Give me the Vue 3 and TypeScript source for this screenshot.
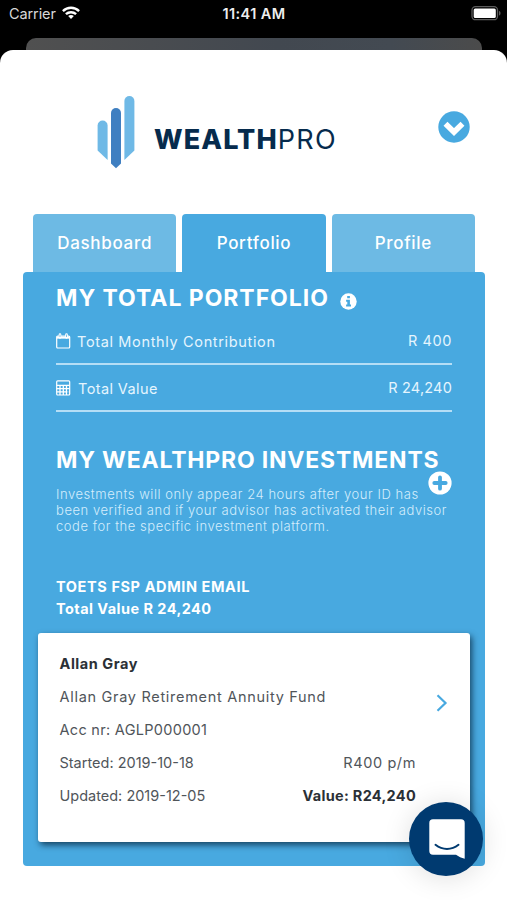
<script setup lang="ts">
interface SummaryRow {
  icon: 'calendar' | 'calculator'
  label: string
  value: string
}

const tabs: string[] = ['Dashboard', 'Portfolio', 'Profile']
const activeTab = 'Portfolio'

const summary: SummaryRow[] = [
  { icon: 'calendar', label: 'Total Monthly Contribution', value: 'R 400' },
  { icon: 'calculator', label: 'Total Value', value: 'R 24,240' },
]

const notice: string[] = [
  'Investments will only appear 24 hours after your ID has',
  'been verified and if your advisor has activated their advisor',
  'code for the specific investment platform.',
]
</script>

<template>
  <div class="screen">
    <header class="status-bar">
      <div class="carrier">
        <span>Carrier</span>
        <svg width="18" height="14" viewBox="0 0 18 14" fill="none" stroke="#fff" stroke-width="2.4">
          <path d="M.9 5.100C5.500.7 12.500.7 17.100 5.100" />
          <path d="M3.900 8.200c2.900-2.700 7.300-2.700 10.200 0" />
          <path d="M6.200 10.100c1.600-1.400 4-1.400 5.600 0L9 13z" fill="#fff" stroke="none" />
        </svg>
      </div>
      <span class="clock">11:41 AM</span>
      <svg class="battery" width="31" height="15" viewBox="0 0 31 15">
        <rect x="1" y=".7" width="25.500" height="13" rx="3.500" fill="none" stroke="#5c5c5c" stroke-width="1.300" />
        <rect x="2.700" y="2.400" width="22.100" height="9.600" rx="1.500" fill="#fff" />
        <path d="M28 5v4.500c2-.6 2-3.900 0-4.500z" fill="#5c5c5c" />
      </svg>
    </header>
    <div class="back-sheet"></div>

    <main class="sheet">
      <div class="brand-row">
        <svg class="brand-mark" width="38" height="74" viewBox="0 0 38 74">
          <path d="M.6 29.500a5 5 0 0 1 10 0V64L.6 54.500z" fill="#6fb9e6" />
          <path d="M14 17a5 5 0 0 1 10 0v50.500L19 72.300 14 67.500z" fill="#3f7fc1" />
          <path d="M27.400 5a5 5 0 0 1 10 0v49.500L27.400 64z" fill="#6fb9e6" />
        </svg>
        <h1 class="brand-name"><b>WEALTH</b><span>PRO</span></h1>
        <svg class="collapse" width="32" height="32" viewBox="0 0 32 32">
          <circle cx="16" cy="16" r="15.700" fill="#48a9e0" />
          <path d="m7.500 12.800 8.500 8.300 8.500-8.300" fill="none" stroke="#fff" stroke-width="5.600" />
        </svg>
      </div>

      <nav class="tabs">
        <div v-for="tab in tabs" :key="tab" class="tab" :class="{ active: tab === activeTab }">{{ tab }}</div>
      </nav>

      <section class="panel">
        <div class="overview">
          <h2 class="total-title">
            <span>MY TOTAL PORTFOLIO</span>
            <svg width="17" height="17" viewBox="0 0 17 17">
              <circle cx="8.500" cy="8.500" r="8.200" fill="#fff" />
              <path d="M7.200 3h2.700v2.300H7.200zM6.100 6.800h3.800v4.600H11v2H6.100v-2h1.200V8.800H6.100z" fill="#48a9e0" />
            </svg>
          </h2>
          <div v-for="row in summary" :key="row.label" class="summary-row" :class="row.icon">
            <svg v-if="row.icon === 'calendar'" width="15" height="16" viewBox="0 0 15 16" fill="none" stroke="#fff">
              <rect x=".7" y="3" width="13" height="12" rx="1" stroke-width="1.200" />
              <path d="M.7 4.500h13" stroke-width="2.300" />
              <path d="M4 1.700v2.600M10.500 1.700v2.600" stroke-width="2.700" stroke-linecap="round" />
              <path d="M4 1.500v2.500M10.500 1.500v2.500" stroke="#48a9e0" stroke-width=".7" />
            </svg>
            <svg v-else width="15" height="16" viewBox="0 0 15 16" fill="none" stroke="#fff">
              <rect x=".7" y=".8" width="13" height="14.200" rx="1" stroke-width="1.200" />
              <path d="M.7 5.400h13M.7 8.600h13M.7 11.800h13M4 5.400V15M7.300 5.400V15M10.500 5.400V15" stroke-width="1.300" />
              <path d="M12.100 9.500v4.500" stroke="#48a9e0" stroke-width="1.300" />
            </svg>
            <span class="label">{{ row.label }}</span>
            <span class="value">{{ row.value }}</span>
          </div>

          <h2 class="investments-title">MY WEALTHPRO INVESTMENTS</h2>
          <div class="notice-wrap">
            <p class="notice"><span v-for="line in notice" :key="line">{{ line }}</span></p>
            <svg class="add" width="24" height="24" viewBox="0 0 24 24">
              <circle cx="12" cy="12" r="11.600" fill="#fff" />
              <path d="M12 6.300v11.400M6.300 12h11.400" stroke="#48a9e0" stroke-width="3.800" stroke-linecap="round" />
            </svg>
          </div>
          <div class="account">
            <p class="account-name">TOETS FSP ADMIN EMAIL</p>
            <p class="account-total">Total Value R 24,240</p>
          </div>
        </div>

        <article class="card">
          <div class="line"><b class="provider">Allan Gray</b></div>
          <div class="line"><span class="fund">Allan Gray Retirement Annuity Fund</span></div>
          <div class="line"><span class="number">Acc nr: AGLP000001</span></div>
          <div class="line"><span>Started: 2019-10-18</span><span class="monthly">R400 p/m</span></div>
          <div class="line"><span>Updated: 2019-12-05</span><b class="worth">Value: R24,240</b></div>
          <svg class="chevron" width="12" height="18" viewBox="0 0 12 18" fill="none" stroke="#48a9e0" stroke-width="2.200">
            <path d="m1.500 1.300 8 7.700-8 7.700" />
          </svg>
        </article>
      </section>
    </main>

    <button class="chat" aria-label="Chat">
      <svg width="36" height="40" viewBox="0 0 36 40">
        <path d="M4 .3h28a3.700 3.700 0 0 1 3.700 3.700v35.700c-3.200-.8-6-2-8.700-4H4A3.700 3.700 0 0 1 .3 32V4A3.700 3.700 0 0 1 4 .3z" fill="#fff" />
        <path d="M6.500 25.800c7 5.500 16 5.500 23 0" fill="none" stroke="#003a70" stroke-width="2" stroke-linecap="round" />
      </svg>
    </button>
  </div>
</template>

<style>
body {
  margin: 0;
  background: #000;
}
</style>

<style scoped>
.screen {
  width: 507px;
  height: 900px;
  overflow: hidden;
  position: relative;
  display: flex;
  flex-direction: column;
  background: #000;
  font-family: Inter, "Liberation Sans", sans-serif;
  color: #fff;
  white-space: nowrap;
}

h1, h2, p {
  margin: 0;
}

svg {
  display: block;
  flex: none;
}

.status-bar {
  height: 38px;
  box-sizing: border-box;
  padding: 5px 5px 0 9px;
  display: grid;
  grid-template-columns: 1fr auto 1fr;
  align-items: start;
  line-height: 18px;
  font-size: 14.500px;
}

.carrier {
  display: flex;
  gap: 6px;
  color: #d8d8d8;
  letter-spacing: -.1px;
}

.carrier svg {
  margin-top: 1px;
}

.clock {
  margin-right: 3px;
  font-weight: 600;
  letter-spacing: .4px;
  color: #eee;
}

.battery {
  justify-self: end;
  margin-top: 1px;
}

.back-sheet {
  flex: none;
  height: 24px;
  margin: 0 25px -12px 26px;
  border-radius: 10px 10px 0 0;
  background: linear-gradient(90deg, #505050, #424850 55%, #434a52 80%, #4b4b4b);
}

.sheet {
  flex: 1;
  position: relative;
  border-radius: 13px 13px 0 0;
  background: #fff;
}

.brand-row {
  height: 164px;
  box-sizing: border-box;
  padding: 46px 37px 0 97px;
  display: flex;
  align-items: flex-start;
}

.brand-name {
  margin: 29px 0 0 19px;
  color: #062b4d;
  font-size: 27px;
  line-height: 30px;
  font-weight: 400;
}

.brand-name b {
  font-weight: 800;
  letter-spacing: 1.100px;
}

.brand-name span {
  font-weight: 400;
  letter-spacing: 1.300px;
}

.collapse {
  margin: 15px 0 0 auto;
}

.tabs {
  height: 58px;
  padding: 0 32px 0 33px;
  display: grid;
  grid-template-columns: repeat(3, 1fr);
  gap: 6px;
}

.tab {
  padding-top: 1px;
  border-radius: 4px 4px 0 0;
  background: #6dbae4;
  font-size: 17px;
  font-weight: 500;
  letter-spacing: .7px;
  line-height: 57px;
  text-align: center;
}

.tab.active {
  background: #48a9e0;
}

.panel {
  height: 594px;
  box-sizing: border-box;
  margin: 0 22px 0 23px;
  padding: 0 15px;
  border-radius: 4px;
  background: #48a9e0;
}

.overview {
  height: 361px;
  padding: 0 18px;
}

.total-title,
.investments-title {
  font-size: 23px;
  font-weight: 700;
  line-height: 28px;
  letter-spacing: .8px;
}

.total-title {
  height: 46px;
  box-sizing: border-box;
  padding-top: 12px;
  display: flex;
  gap: 11px;
  letter-spacing: .95px;
}

.total-title svg {
  margin-top: 9px;
}

.summary-row {
  height: 47px;
  box-sizing: border-box;
  padding-top: 1px;
  border-bottom: 2px solid #b5def6;
  display: flex;
  align-items: center;
  font-size: 14.500px;
  color: #e5f5fe;
}

.label {
  margin-left: 6px;
  letter-spacing: .65px;
}

.calculator .label {
  margin-left: 7px;
  letter-spacing: .4px;
}

.value {
  margin: 0 0 2px auto;
  letter-spacing: .2px;
}

.calendar .value {
  letter-spacing: .6px;
}

.investments-title {
  margin-top: 34px;
}

.notice-wrap {
  position: relative;
  margin-top: 12px;
}

.notice {
  font-size: 13px;
  font-weight: 300;
  line-height: 16px;
  letter-spacing: .55px;
  color: #d4edfc;
}

.notice span {
  display: block;
}

.add {
  position: absolute;
  right: 0;
  top: -15px;
}

.account {
  margin-top: 42px;
  font-size: 14.500px;
  font-weight: 700;
  line-height: 22px;
}

.account-name {
  letter-spacing: .6px;
}

.account-total {
  letter-spacing: .45px;
}

.card {
  position: relative;
  height: 209px;
  box-sizing: border-box;
  padding: 14px 54px 0 21.500px;
  border-radius: 3px;
  background: #fff;
  box-shadow: 2px 3px 6px rgba(0, 25, 45, .7);
  color: #50555a;
  font-size: 14.500px;
}

.line {
  height: 33px;
  display: flex;
  justify-content: space-between;
  align-items: center;
}

.card b {
  color: #2b3036;
}

.provider {
  letter-spacing: .55px;
}

.fund {
  letter-spacing: .7px;
}

.number {
  letter-spacing: .3px;
}

.monthly {
  letter-spacing: .6px;
}

.worth {
  letter-spacing: .3px;
}

.chevron {
  position: absolute;
  right: 22px;
  top: 61px;
}

.chat {
  position: absolute;
  left: 409px;
  top: 802px;
  width: 74px;
  height: 74px;
  padding: 0 0 0 1px;
  border: 0;
  border-radius: 50%;
  background: #003a70;
  display: flex;
  align-items: center;
  justify-content: center;
  box-shadow: 0 2px 28px rgba(0, 0, 0, .13);
}
</style>
